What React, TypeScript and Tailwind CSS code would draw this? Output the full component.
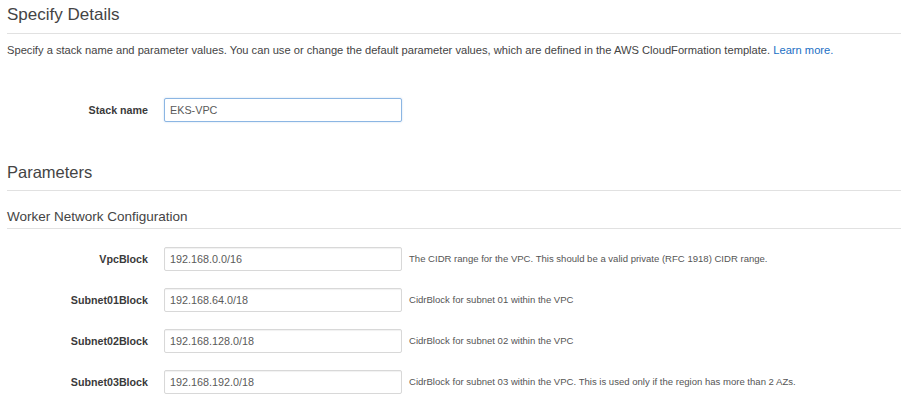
import React from 'react';

const rows = [
  {
    name: 'VpcBlock',
    value: '192.168.0.0/16',
    help: 'The CIDR range for the VPC. This should be a valid private (RFC 1918) CIDR range.',
  },
  { name: 'Subnet01Block', value: '192.168.64.0/18', help: 'CidrBlock for subnet 01 within the VPC' },
  { name: 'Subnet02Block', value: '192.168.128.0/18', help: 'CidrBlock for subnet 02 within the VPC' },
  {
    name: 'Subnet03Block',
    value: '192.168.192.0/18',
    help: 'CidrBlock for subnet 03 within the VPC. This is used only if the region has more than 2 AZs.',
  },
];

function Field({ label, value, focused }: { label: string; value: string; focused?: boolean }) {
  return (
    <div className="flex items-center h-[24px]">
      <div className="w-[141px] text-right text-[10.7px] font-bold text-[#3a3a3a]">{label}</div>
      <div
        className={
          focused
            ? 'ml-[16px] w-[238px] h-[24px] rounded-[2px] border border-[#8cb6e3] bg-white px-[5px] flex items-center text-[10.8px] text-[#5a5a5a] shadow-[0_0_2px_rgba(80,140,210,0.35)]'
            : 'ml-[16px] w-[238px] h-[24px] rounded-[2px] border border-[#d8d8d8] bg-white px-[5px] flex items-center text-[10.8px] text-[#5a5a5a] shadow-[inset_0_1px_1px_rgba(0,0,0,0.06)]'
        }
      >
        {value}
      </div>
    </div>
  );
}

export default function App() {
  return (
    <div className="w-[901px] h-[418px] bg-white overflow-hidden pl-[7px] font-['Liberation_Sans',Arial,sans-serif] text-[#444]">
      <div className="pt-[3px] h-[34px] text-[17px] leading-[24px] text-[#444] border-b border-[#e1e1e1]">
        Specify Details
      </div>
      <p className="mt-[9px] text-[11.15px] leading-[14px] text-[#444]">
        Specify a stack name and parameter values. You can use or change the default parameter values, which are
        defined in the AWS CloudFormation template. <span className="text-[#1a6fc4]">Learn more.</span>
      </p>

      <div className="mt-[41px]">
        <Field label="Stack name" value="EKS-VPC" focused />
      </div>

      <div className="mt-[38px] h-[31px] text-[16.5px] leading-[24px] text-[#444] border-b border-[#e1e1e1]">
        Parameters
      </div>
      <div className="mt-[17px] h-[21px] text-[13.5px] leading-[18px] text-[#444] border-b border-[#e1e1e1]">
        Worker Network Configuration
      </div>

      <div className="mt-[18px] flex flex-col gap-[17px]">
        {rows.map((r) => (
          <div key={r.name} className="flex items-center">
            <Field label={r.name} value={r.value} />
            <div className="ml-[7px] text-[9.55px] text-[#555]">{r.help}</div>
          </div>
        ))}
      </div>
    </div>
  );
}
